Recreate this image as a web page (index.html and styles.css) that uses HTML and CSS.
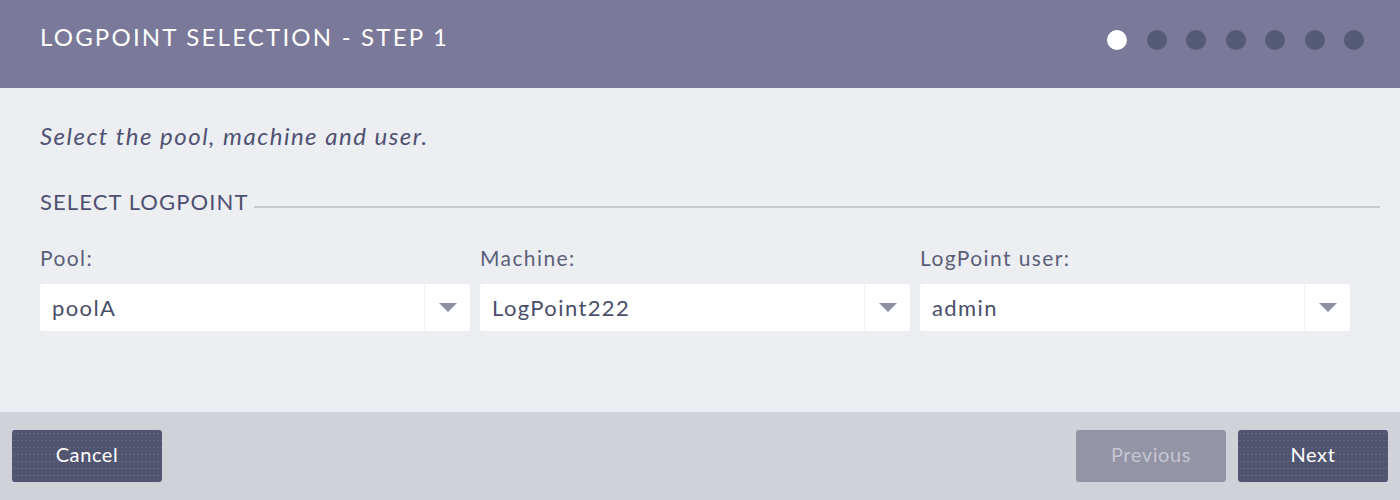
FILE: index.html
```html
<!DOCTYPE html>
<html>
<head>
<meta charset="utf-8">
<link rel="stylesheet" href="styles.css">
</head>
<body>
<div class="dialog">
  <header class="head">
    <h1 class="title">LOGPOINT SELECTION - STEP 1</h1>
    <div class="dots">
      <span class="dot active"></span>
      <span class="dot"></span>
      <span class="dot"></span>
      <span class="dot"></span>
      <span class="dot"></span>
      <span class="dot"></span>
      <span class="dot"></span>
    </div>
  </header>
  <main class="body">
    <p class="intro">Select the pool, machine and user.</p>
    <div class="section">
      <span class="section-title">SELECT LOGPOINT</span>
      <span class="section-line"></span>
    </div>
    <div class="fields">
      <div class="field">
        <label class="label">Pool:</label>
        <div class="select">
          <span class="value">poolA</span>
          <span class="arrow"></span>
        </div>
      </div>
      <div class="field">
        <label class="label">Machine:</label>
        <div class="select">
          <span class="value">LogPoint222</span>
          <span class="arrow"></span>
        </div>
      </div>
      <div class="field">
        <label class="label">LogPoint user:</label>
        <div class="select">
          <span class="value">admin</span>
          <span class="arrow"></span>
        </div>
      </div>
    </div>
  </main>
  <footer class="foot">
    <button class="btn">Cancel</button>
    <div class="right">
      <button class="btn disabled">Previous</button>
      <button class="btn">Next</button>
    </div>
  </footer>
</div>
</body>
</html>
```
FILE: styles.css
```css
* { box-sizing: border-box; }
html, body { margin: 0; padding: 0; }
body {
  width: 1400px;
  height: 500px;
  overflow: hidden;
  font-family: Lato, "Noto Sans", sans-serif;
  background: #edeef2;
}
.dialog {
  display: flex;
  flex-direction: column;
  height: 500px;
}
.head {
  height: 88px;
  flex: none;
  background: #7a7999;
  display: flex;
  align-items: center;
  justify-content: space-between;
  padding: 0 36px 0 40px;
}
.title {
  margin: 0;
  color: #ffffff;
  font-weight: 400;
  font-size: 24px;
  line-height: 30px;
  letter-spacing: 2.2px;
  position: relative;
  top: -7px;
}
.dots {
  display: flex;
  gap: 19.5px;
  position: relative;
  top: -4px;
}
.dot {
  width: 20px;
  height: 20px;
  border-radius: 50%;
  background: #555a77;
}
.dot.active { background: #ffffff; }
.body {
  flex: 1;
  padding: 0 50px 0 40px;
}
.intro {
  margin: 33px 0 0;
  font-style: italic;
  font-size: 24px;
  line-height: 30px;
  color: #4f5273;
  letter-spacing: 1.5px;
}
.section {
  display: flex;
  align-items: center;
  margin-top: 37px;
  height: 28px;
}
.section-title {
  font-size: 22px;
  line-height: 28px;
  color: #4d5070;
  letter-spacing: 1.1px;
}
.section-line {
  flex: 1;
  height: 2px;
  background: #c8c9d0;
  margin-left: 6px;
  margin-right: -30px;
  position: relative;
  top: 5px;
}
.fields {
  display: flex;
  gap: 10px;
  margin-top: 29px;
}
.field {
  width: 430px;
  display: flex;
  flex-direction: column;
}
.label {
  font-size: 21px;
  line-height: 26px;
  color: #5b5e78;
  letter-spacing: 1.4px;
  margin-bottom: 13px;
}
.select {
  height: 47px;
  background: #ffffff;
  border-radius: 3px;
  display: flex;
  align-items: center;
}
.value {
  flex: 1;
  padding-left: 12px;
  font-size: 22px;
  color: #4a4d6a;
  letter-spacing: 1.4px;
  height: 100%;
  display: flex;
  align-items: center;
  border-right: 1px solid #f0f0f3;
}
.arrow {
  width: 45px;
  height: 100%;
  position: relative;
}
.arrow::after {
  content: "";
  position: absolute;
  left: 14px;
  top: 19px;
  border-left: 9px solid transparent;
  border-right: 9px solid transparent;
  border-top: 9px solid #8f8fa3;
}
.foot {
  height: 88px;
  flex: none;
  background: #d1d1da;
  display: flex;
  align-items: center;
  justify-content: space-between;
  padding: 0 12px;
}
.right { display: flex; gap: 12px; }
.btn {
  width: 150px;
  height: 52px;
  border: none;
  border-radius: 3px;
  background-color: #50546f;
  background-image: radial-gradient(circle, rgba(255,255,255,0.12) 0.6px, transparent 0.8px);
  background-size: 4px 7px;
  color: #ffffff;
  font-family: Lato, "Noto Sans", sans-serif;
  font-size: 20px;
  line-height: 24px;
  letter-spacing: 0.6px;
  padding: 0 0 4px;
}
.btn.disabled {
  background-color: #9394a6;
  background-image: none;
  color: #c6c6d1;
}
```
